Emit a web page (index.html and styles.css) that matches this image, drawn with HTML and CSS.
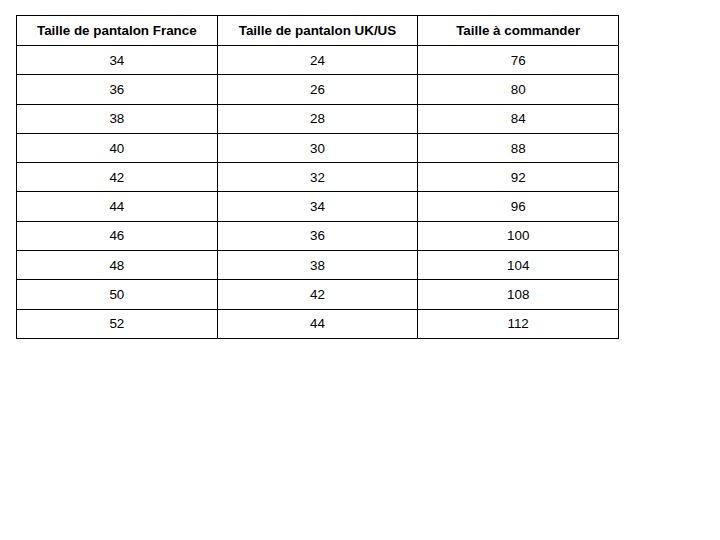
FILE: index.html
```html
<!DOCTYPE html>
<html lang="fr">
<head>
<meta charset="utf-8">
<link rel="stylesheet" href="styles.css">
</head>
<body>
<table class="sizes">
<thead>
<tr><th>Taille de pantalon France</th><th>Taille de pantalon UK/US</th><th>Taille à commander</th></tr>
</thead>
<tbody>
<tr><td>34</td><td>24</td><td>76</td></tr>
<tr><td>36</td><td>26</td><td>80</td></tr>
<tr><td>38</td><td>28</td><td>84</td></tr>
<tr><td>40</td><td>30</td><td>88</td></tr>
<tr><td>42</td><td>32</td><td>92</td></tr>
<tr><td>44</td><td>34</td><td>96</td></tr>
<tr><td>46</td><td>36</td><td>100</td></tr>
<tr><td>48</td><td>38</td><td>104</td></tr>
<tr><td>50</td><td>42</td><td>108</td></tr>
<tr><td>52</td><td>44</td><td>112</td></tr>
</tbody>
</table>
</body>
</html>
```
FILE: styles.css
```css
html, body {
  margin: 0;
  padding: 0;
  background: #fff;
}
body {
  font-family: "Liberation Sans", Arial, sans-serif;
  font-size: 13.4px;
  color: #000;
}
.sizes {
  border-collapse: collapse;
  margin: 15px 0 0 16px;
  width: 603px;
  table-layout: fixed;
}
.sizes th, .sizes td {
  border: 1px solid #000;
  text-align: center;
  padding: 0;
}
.sizes th {
  height: 29px;
  font-weight: bold;
}
.sizes td {
  height: 28.3px;
}
```
